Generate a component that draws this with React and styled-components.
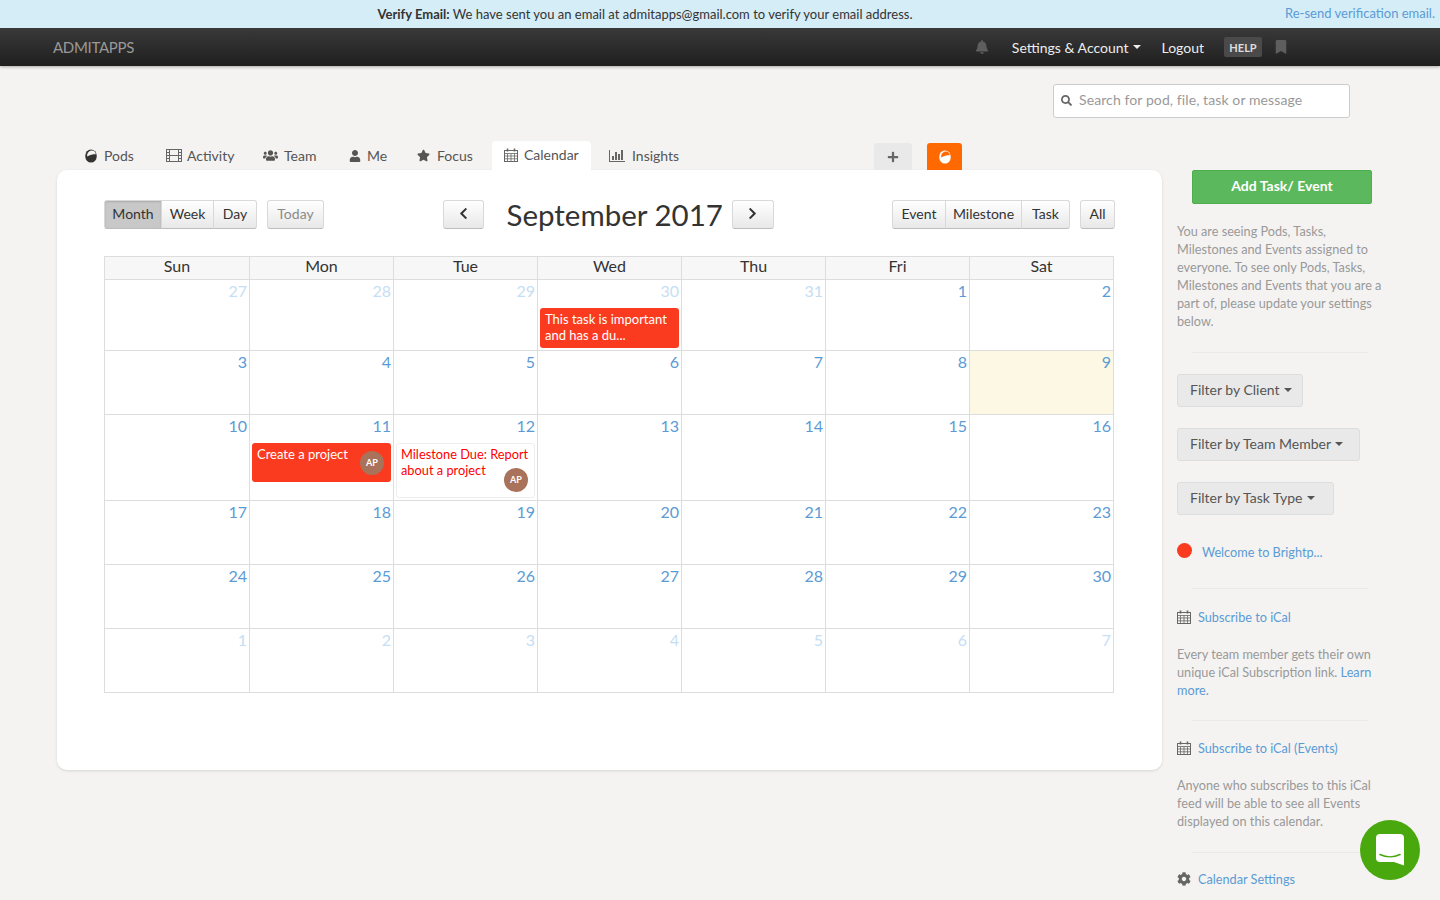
import React from "react";
import styled, { createGlobalStyle } from "styled-components";
import {
  FaBell,
  FaBookmark,
  FaChevronLeft,
  FaChevronRight,
  FaCog,
  FaPlus,
  FaSearch,
  FaStar,
  FaUser,
  FaUsers,
} from "react-icons/fa";

const GlobalStyle = createGlobalStyle`
  html, body {
    margin: 0;
    height: 900px;
    overflow: hidden;
    background: #f4f3f1;
    font-family: Lato, "Liberation Sans", sans-serif;
    color: #333;
  }
  * { box-sizing: border-box; }
`;

const Notice = styled.div`
  height: 28px;
  background: #d5edf7;
  font-size: 13px;
  display: flex;
  align-items: center;
  justify-content: center;
  position: relative;
  padding: 0 150px 1px 0;
  color: #333;
  b { font-weight: 700; }
`;
const Resend = styled.a`
  position: absolute;
  right: 5px;
  top: 5px;
  color: #5b9bd5;
  font-size: 13px;
`;
const Navbar = styled.div`
  height: 38px;
  background: linear-gradient(#393939, #1f1f1f);
  box-shadow: 0 1px 3px rgba(0, 0, 0, 0.3);
  display: flex;
  align-items: center;
  padding: 0 152px 0 53px;
  color: #fff;
  font-size: 14px;
`;
const Brand = styled.div`
  color: #999;
  font-size: 15px;
  letter-spacing: -0.3px;
  margin-right: auto;
`;
const NavIcon = styled.span`
  color: #5e5e5e;
  display: flex;
  font-size: 14px;
`;
const NavLink = styled.a`
  color: #ececec;
  display: flex;
  align-items: center;
  gap: 5px;
  margin-left: ${({ $gap }) => $gap}px;
`;
const Caret = styled.i`
  display: inline-block;
  width: 0;
  height: 0;
  border-top: 4px solid ${({ $color }) => $color || "currentColor"};
  border-left: 4px solid transparent;
  border-right: 4px solid transparent;
`;
const Help = styled.span`
  background: #4a4a4a;
  color: #ddd;
  font-size: 11px;
  font-weight: 700;
  height: 20px;
  width: 38px;
  border-radius: 2px;
  display: flex;
  align-items: center;
  justify-content: center;
  margin: 0 12px 0 20px;
`;

const SearchRow = styled.div`
  height: 75px;
  padding: 18px 90px 0 0;
  display: flex;
  justify-content: flex-end;
`;
const SearchBox = styled.div`
  width: 297px;
  height: 34px;
  background: #fff;
  border: 1px solid #ccc;
  border-radius: 3px;
  display: flex;
  align-items: center;
  gap: 7px;
  padding: 0 7px 3px;
  color: #999;
  font-size: 14px;
  letter-spacing: 0.1px;
  svg { color: #666; font-size: 11px; margin-top: 1px; }
`;

const Body = styled.div`
  display: flex;
  padding-left: 57px;
  align-items: flex-start;
`;
const Left = styled.div`
  width: 1105px;
`;
const Tabs = styled.div`
  height: 29px;
  display: flex;
  align-items: flex-end;
  padding: 0 200px 0 16px;
`;
const Tab = styled.div`
  width: ${({ $w }) => $w}px;
  height: 29px;
  padding: 0 0 ${({ $active }) => ($active ? 2 : 0)}px 12px;
  margin-right: 6px;
  display: flex;
  align-items: center;
  gap: ${({ $gap }) => $gap}px;
  font-size: 14px;
  color: #555;
  border-radius: 4px 4px 0 0;
  background: ${({ $active }) => ($active ? "#fff" : "transparent")};
  svg { color: #555; flex: none; }
`;
const TabAdd = styled.div`
  width: ${({ $orange }) => ($orange ? 35 : 38)}px;
  height: 27px;
  margin-left: ${({ $orange }) => ($orange ? "15px" : "auto")};
  background: ${({ $orange }) => ($orange ? "#ff6900" : "#e9e9e9")};
  color: #666;
  border-radius: 3px 3px 0 0;
  display: flex;
  align-items: center;
  justify-content: center;
  font-size: 12px;
`;
const Card = styled.div`
  height: 600px;
  background: #fff;
  border-radius: 10px;
  box-shadow: 0 1px 3px rgba(0, 0, 0, 0.12);
  padding: 30px 47px;
`;
const Toolbar = styled.div`
  display: flex;
  align-items: center;
  justify-content: space-between;
  height: 29px;
  margin-bottom: 27px;
`;
const Group = styled.div`
  display: flex;
  align-items: center;
  gap: ${({ $gap }) => $gap || 0}px;
`;
const BtnGroup = styled.div`
  display: flex;
`;
const Btn = styled.button`
  width: ${({ $w }) => $w}px;
  height: 29px;
  padding: 0 0 2px;
  font: inherit;
  font-size: 14px;
  color: ${({ $muted }) => ($muted ? "#8a8a8a" : "#333")};
  border: 1px solid #d9d9d9;
  border-bottom-color: #bdbdbd;
  margin-left: -1px;
  background: ${({ $on }) =>
    $on ? "#c8c8c8" : "linear-gradient(#fff, #e8e8e8)"};
  box-shadow: ${({ $on }) => ($on ? "inset 0 1px 2px rgba(0,0,0,.15)" : "none")};
  display: flex;
  align-items: center;
  justify-content: center;
  &:first-child {
    margin-left: 0;
    border-radius: 3px 0 0 3px;
  }
  &:last-child {
    border-radius: 0 3px 3px 0;
  }
  &:only-child {
    border-radius: 3px;
  }
`;
const Title = styled.div`
  width: 215px;
  font-size: 29.500px;
  line-height: 27px;
  white-space: nowrap;
  color: #333;
  margin: 0 10px 0 23px;
`;

const Grid = styled.div`
  width: 1010px;
  border-left: 1px solid #ddd;
  border-top: 1px solid #ddd;
  display: grid;
  grid-template-columns: 145px repeat(6, 144px);
`;
const Head = styled.div`
  height: 23px;
  background: #f7f7f7;
  border-right: 1px solid #ddd;
  border-bottom: 1px solid #ddd;
  font-size: 16px;
  line-height: 18px;
  text-align: center;
  color: #333;
`;
const Cell = styled.div`
  min-height: 64px;
  border-right: 1px solid #ddd;
  border-bottom: 1px solid #ddd;
  background: ${({ $today }) => ($today ? "#fcf8e3" : "transparent")};
  padding-bottom: 2px;
`;
const Num = styled.div`
  height: 23px;
  padding: 1px 2px 0 0;
  text-align: right;
  font-size: 16px;
  line-height: 20px;
  color: ${({ $off }) => ($off ? "#c6def3" : "#5b9bd5")};
  margin-bottom: 5px;
`;
const Event = styled.div`
  position: relative;
  margin: 0 2px;
  height: ${({ $h }) => $h}px;
  padding: ${({ $milestone }) => ($milestone ? "2px 4px" : "3px 5px")};
  border-radius: 3px;
  font-size: ${({ $milestone }) => ($milestone ? 12.8 : 13)}px;
  line-height: 16px;
  white-space: nowrap;
  color: ${({ $milestone }) => ($milestone ? "#f00" : "#fff")};
  background: ${({ $milestone }) => ($milestone ? "#fff" : "#fb3b20")};
  border: ${({ $milestone }) => ($milestone ? "1px solid #eee" : "none")};
`;
const Avatar = styled.span`
  position: absolute;
  right: ${({ $right }) => $right}px;
  bottom: ${({ $bottom }) => $bottom}px;
  width: 24px;
  height: 24px;
  border-radius: 50%;
  background: #a9725a;
  color: #fff;
  font-size: 9px;
  font-weight: 700;
  display: flex;
  align-items: center;
  justify-content: center;
`;

const Side = styled.div`
  width: 206px;
  margin: 29px 0 0 15px;
  flex: none;
`;
const AddBtn = styled.button`
  display: block;
  width: 180px;
  height: 34px;
  margin: 0 0 18px 15px;
  padding: 0 0 3px;
  background: #5cb85c;
  border: 1px solid #4cae4c;
  border-radius: 2px;
  color: #fff;
  font: inherit;
  font-size: 14px;
  font-weight: 700;
`;
const SideText = styled.p`
  margin: ${({ $top }) => $top || 0}px 0 0;
  font-size: 12.700px;
  line-height: 18px;
  color: #999;
  white-space: nowrap;
`;
const Rule = styled.div`
  height: 1px;
  width: 176px;
  margin: ${({ $top }) => $top}px 0 ${({ $bottom }) => $bottom}px 15px;
  background: #ebeae8;
`;
const Filter = styled.button`
  width: ${({ $w }) => $w}px;
  height: 33px;
  display: flex;
  align-items: center;
  gap: 4px;
  padding: 0 12px 2px;
  margin-bottom: 21px;
  background: #e9e9e9;
  border: 1px solid #ddd;
  border-radius: 3px;
  font: inherit;
  font-size: 14px;
  color: #555;
  white-space: nowrap;
`;
const Row = styled.div`
  display: flex;
  align-items: center;
  gap: ${({ $gap }) => $gap}px;
  height: 18px;
  margin-top: ${({ $top }) => $top || 0}px;
  font-size: 12.700px;
  color: #5b9bd5;
  svg { color: #666; flex: none; }
`;
const Dot = styled.span`
  width: 15px;
  height: 15px;
  border-radius: 50%;
  background: #fb3b20;
  margin-top: -3px;
`;
const Blue = styled.a`
  color: #5b9bd5;
`;
const Chat = styled.div`
  position: fixed;
  left: 1360px;
  top: 820px;
  width: 60px;
  height: 60px;
  border-radius: 50%;
  background: #4aa80f;
  display: flex;
  align-items: center;
  justify-content: center;
`;

const CalIcon = ({ size = 14 }) => (
  <svg width={size} height={size} viewBox="0 0 14 14" fill="none" stroke="#666">
    <rect x="0.5" y="2.5" width="13" height="11" />
    <path d="M0.5 5.500h13M0.5 8h13M0.5 10.800h13M3.500 5.500v8M7 5.500v8M10.500 5.500v8" strokeWidth="0.8" />
    <path d="M3.500 0.500v3M10.500 0.500v3" strokeWidth="1.6" />
  </svg>
);
const PodIcon = ({ color = "#333", hole = "#f4f3f1" }) => (
  <svg width="12" height="14" viewBox="0 0 12 14">
    <ellipse cx="6" cy="7" rx="5.8" ry="6.6" fill={color} />
    <path d="M2.200 7.500C1.800 4 4 1.600 7 1.600c2.200 0 3.600 1.400 3.800 3.600-3 0-6 .6-8.600 2.300z" fill={hole} />
  </svg>
);
const FilmIcon = () => (
  <svg width="16" height="13" viewBox="0 0 16 13" fill="none" stroke="#666">
    <rect x="0.500" y="0.500" width="15" height="12" />
    <path d="M3.500 0.500v12M12.500 0.500v12M3.500 6.500h9M0.500 3.500h3M0.500 6.500h3M0.500 9.500h3M12.500 3.500h3M12.500 6.500h3M12.500 9.500h3" />
  </svg>
);
const InsightsIcon = () => (
  <svg width="16" height="13" viewBox="0 0 16 13" fill="#666">
    <rect x="0" y="12" width="16" height="1" />
    <rect x="0" y="1" width="1" height="11" />
    <rect x="3" y="7" width="2" height="4" />
    <rect x="6" y="3" width="2" height="8" />
    <rect x="9" y="5" width="2" height="6" />
    <rect x="12" y="1" width="2" height="10" />
  </svg>
);
const ChatIcon = () => (
  <svg width="28" height="32" viewBox="0 0 28 32">
    <path d="M4 0h20a4 4 0 0 1 4 4v27.500l-10-3.500H4a4 4 0 0 1-4-4V4a4 4 0 0 1 4-4z" fill="#fff" />
    <path d="M4 20.500c6 3 14 3 20 0" fill="none" stroke="#4aa80f" strokeWidth="1.600" strokeLinecap="round" />
  </svg>
);

const days = ["Sun", "Mon", "Tue", "Wed", "Thu", "Fri", "Sat"];
const weeks = [
  [27, 28, 29, 30, 31, 1, 2],
  [3, 4, 5, 6, 7, 8, 9],
  [10, 11, 12, 13, 14, 15, 16],
  [17, 18, 19, 20, 21, 22, 23],
  [24, 25, 26, 27, 28, 29, 30],
  [1, 2, 3, 4, 5, 6, 7],
];

const eventFor = (w, d) => {
  if (w === 0 && d === 3)
    return (
      <Event $h={40}>
        This task is important
        <br />
        and has a du...
      </Event>
    );
  if (w === 2 && d === 1)
    return (
      <Event $h={39}>
        Create a project
        <Avatar $right={7} $bottom={7}>
          AP
        </Avatar>
      </Event>
    );
  if (w === 2 && d === 2)
    return (
      <Event $milestone $h={55}>
        Milestone Due: Report
        <br />
        about a project
        <Avatar $right={6} $bottom={5}>
          AP
        </Avatar>
      </Event>
    );
  return null;
};

export default function App() {
  return (
    <>
      <GlobalStyle />
      <Notice>
        <span>
          <b>Verify Email:</b> We have sent you an email at admitapps@gmail.com
          to verify your email address.
        </span>
        <Resend>Re-send verification email.</Resend>
      </Notice>
      <Navbar>
        <Brand>ADMITAPPS</Brand>
        <NavIcon>
          <FaBell />
        </NavIcon>
        <NavLink $gap={23}>
          Settings &amp; Account <Caret />
        </NavLink>
        <NavLink $gap={20}>Logout</NavLink>
        <Help>HELP</Help>
        <NavIcon>
          <FaBookmark />
        </NavIcon>
      </Navbar>
      <SearchRow>
        <SearchBox>
          <FaSearch />
          Search for pod, file, task or message
        </SearchBox>
      </SearchRow>
      <Body>
        <Left>
          <Tabs>
            <Tab $w={75} $gap={7}>
              <PodIcon />
              Pods
            </Tab>
            <Tab $w={91} $gap={5}>
              <FilmIcon />
              Activity
            </Tab>
            <Tab $w={80} $gap={6}>
              <FaUsers size={15} />
              Team
            </Tab>
            <Tab $w={62} $gap={6}>
              <FaUser size={12} />
              Me
            </Tab>
            <Tab $w={81} $gap={7}>
              <FaStar size={13} />
              Focus
            </Tab>
            <Tab $active $w={99} $gap={6}>
              <CalIcon />
              Calendar
            </Tab>
            <Tab $w={94} $gap={7}>
              <InsightsIcon />
              Insights
            </Tab>
            <TabAdd>
              <FaPlus />
            </TabAdd>
            <TabAdd $orange>
              <PodIcon color="#fff" hole="#ff6900" />
            </TabAdd>
          </Tabs>
          <Card>
            <Toolbar>
              <Group $gap={10}>
                <BtnGroup>
                  <Btn $on $w={58}>
                    Month
                  </Btn>
                  <Btn $w={53}>Week</Btn>
                  <Btn $w={44}>Day</Btn>
                </BtnGroup>
                <BtnGroup>
                  <Btn $muted $w={57}>
                    Today
                  </Btn>
                </BtnGroup>
              </Group>
              <Group>
                <BtnGroup>
                  <Btn $w={41}>
                    <FaChevronLeft size={13} />
                  </Btn>
                </BtnGroup>
                <Title>September 2017</Title>
                <BtnGroup>
                  <Btn $w={42}>
                    <FaChevronRight size={13} />
                  </Btn>
                </BtnGroup>
              </Group>
              <Group $gap={10}>
                <BtnGroup>
                  <Btn $w={54}>Event</Btn>
                  <Btn $w={77}>Milestone</Btn>
                  <Btn $w={49}>Task</Btn>
                </BtnGroup>
                <BtnGroup>
                  <Btn $w={35}>All</Btn>
                </BtnGroup>
              </Group>
            </Toolbar>
            <Grid>
              {days.map((d) => (
                <Head key={d}>{d}</Head>
              ))}
              {weeks.map((week, w) =>
                week.map((n, d) => (
                  <Cell key={`${w}-${d}`} $today={w === 1 && d === 6}>
                    <Num $off={(w === 0 && d < 5) || w === 5}>{n}</Num>
                    {eventFor(w, d)}
                  </Cell>
                ))
              )}
            </Grid>
          </Card>
        </Left>
        <Side>
          <AddBtn>Add Task/ Event</AddBtn>
          <SideText>
            You are seeing Pods, Tasks,
            <br />
            Milestones and Events assigned to
            <br />
            everyone. To see only Pods, Tasks,
            <br />
            Milestones and Events that you are a
            <br />
            part of, please update your settings
            <br />
            below.
          </SideText>
          <Rule $top={22} $bottom={21} />
          <Filter $w={126}>
            Filter by Client <Caret $color="#555" />
          </Filter>
          <Filter $w={183}>
            Filter by Team Member <Caret $color="#555" />
          </Filter>
          <Filter $w={157}>
            Filter by Task Type <Caret $color="#555" />
          </Filter>
          <Row $gap={10} $top={28}>
            <Dot />
            Welcome to Brightp...
          </Row>
          <Rule $top={27} $bottom={19} />
          <Row $gap={7}>
            <CalIcon />
            Subscribe to iCal
          </Row>
          <SideText $top={19}>
            Every team member gets their own
            <br />
            unique iCal Subscription link. <Blue>Learn</Blue>
            <br />
            <Blue>more.</Blue>
          </SideText>
          <Rule $top={21} $bottom={18} />
          <Row $gap={7}>
            <CalIcon />
            Subscribe to iCal (Events)
          </Row>
          <SideText $top={19}>
            Anyone who subscribes to this iCal
            <br />
            feed will be able to see all Events
            <br />
            displayed on this calendar.
          </SideText>
          <Rule $top={22} $bottom={17} />
          <Row $gap={7}>
            <FaCog size={14} />
            Calendar Settings
          </Row>
        </Side>
      </Body>
      <Chat>
        <ChatIcon />
      </Chat>
    </>
  );
}
